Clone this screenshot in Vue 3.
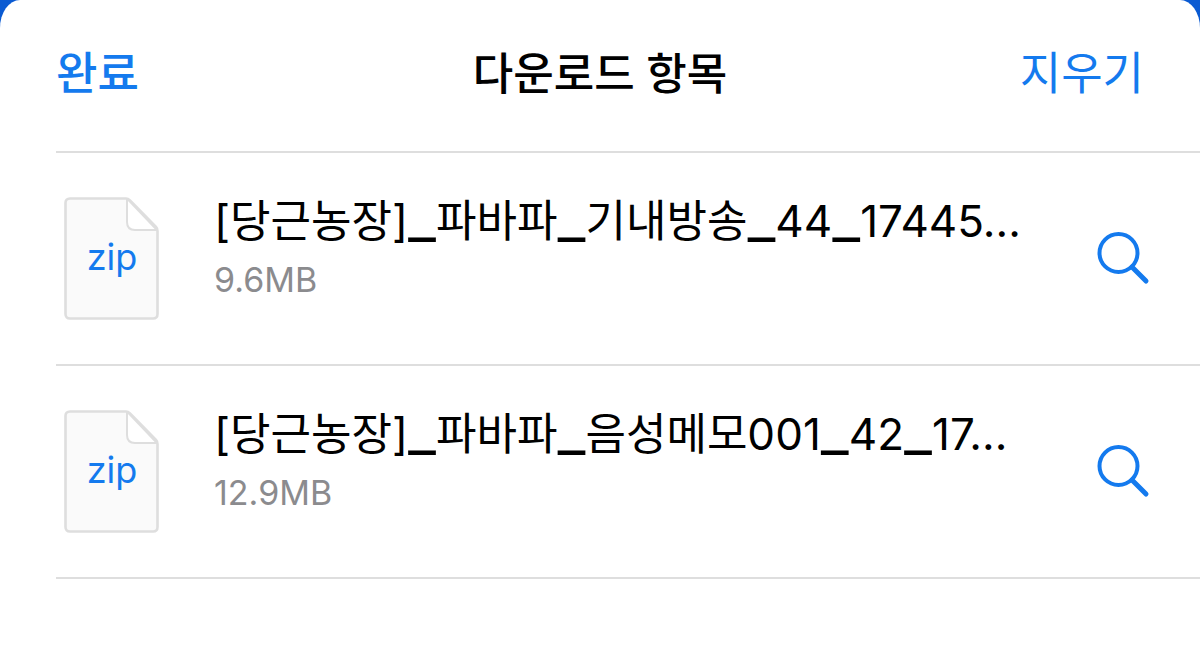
<script setup>
const files = [
  { id: 1, name: '[당근농장]_파바파_기내방송_44_17445...', size: '9.6MB' },
  { id: 2, name: '[당근농장]_파바파_음성메모001_42_17...', size: '12.9MB' },
]

const segments = (name) =>
  name.match(/_|[^_]+/g).map((text) => ({
    text,
    kind: text === '_' ? 'underscore' : 'word',
  }))
</script>

<template>
  <main class="backdrop">
    <section class="sheet" aria-labelledby="title">
      <header class="bar">
        <button class="action done" type="button">완료</button>
        <h1 id="title">다운로드 항목</h1>
        <button class="action clear" type="button">지우기</button>
      </header>
      <ul class="list">
        <li v-for="file in files" :key="file.id" class="row">
          <div class="thumb">
            <svg viewBox="0 0 96 124" aria-hidden="true">
              <path d="M6 2.500H62Q64 2.500 66 4.500L92 31Q93.500 32.500 93.500 35V118Q93.500 122.500 89 122.500H6Q1.500 122.500 1.500 118V7Q1.500 2.500 6 2.500Z" fill="#fafafa" stroke="#dedede" stroke-width="2.600" />
              <path d="M63 3V26Q63 34 71 34H93L64 3.500Z" fill="#fff" stroke="#dedede" stroke-width="2" stroke-linejoin="round" />
            </svg>
            <span class="ext">zip</span>
          </div>
          <div class="info">
            <h2><span v-for="(part, i) in segments(file.name)" :key="i" :class="part.kind">{{ part.text }}</span></h2>
            <p>{{ file.size }}</p>
          </div>
          <button class="find" type="button" aria-label="찾기">
            <svg viewBox="0 0 54 54" aria-hidden="true">
              <circle cx="22.500" cy="22" r="19" />
              <path d="M36 36L50 50" />
            </svg>
          </button>
        </li>
      </ul>
    </section>
  </main>
</template>

<style>
html, body { margin: 0; background: #0a5ad2; }
</style>

<style scoped>
* { box-sizing: border-box; }
.backdrop {
  background: #0a5ad2;
  font-family: Inter, "Noto Sans CJK KR", sans-serif;
  color: #000;
}
.sheet {
  min-height: 100vh;
  padding-left: 56px;
  background: #fff;
  border-radius: 20px 20px 0 0 / 28px 28px 0 0;
}
.bar {
  display: grid;
  grid-template-columns: 1fr auto 1fr;
  align-items: center;
  height: 153px;
  padding: 0 56px 4px 0;
  border-bottom: 2px solid #dedede;
}
h1, h2, p, ul { margin: 0; padding: 0; }
h1 { font-size: 44px; line-height: 60px; font-weight: 500; }
button { border: 0; padding: 0; background: none; color: #147aee; font-family: inherit; cursor: pointer; }
.action { font-size: 45px; line-height: 60px; }
.done { justify-self: start; font-weight: 500; }
.clear { justify-self: end; }
.list { list-style: none; }
.row {
  display: flex;
  align-items: flex-start;
  height: 213px;
  padding: 43px 50px 0 8px;
  border-bottom: 2px solid #dedede;
}
.thumb { position: relative; flex: none; width: 96px; height: 124px; }
svg { display: block; width: 100%; height: 100%; }
.ext { position: absolute; inset: 39px 0 auto; text-align: center; color: #147aee; font-size: 36px; line-height: 44px; }
.info { flex: 1; min-width: 0; padding-left: 54px; }
h2 { height: 52px; font-size: 44px; line-height: 50px; font-weight: 400; white-space: nowrap; }
.underscore { font-family: Roboto, sans-serif; font-size: 62px; line-height: 1px; }
p { margin-top: 14px; color: #8b8b8e; font-size: 34px; line-height: 36px; }
.find { flex: none; width: 54px; height: 54px; margin-top: 35px; }
.find svg { fill: none; stroke: #147aee; stroke-width: 4; stroke-linecap: round; }
.find path { stroke-width: 5; }
</style>
